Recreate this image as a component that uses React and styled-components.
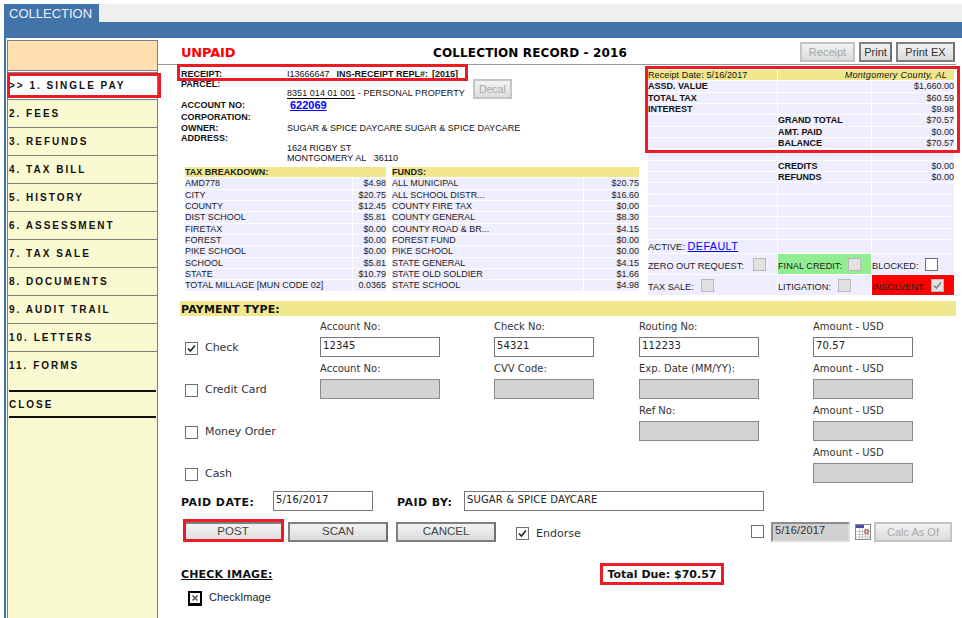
import React from "react";
import styled, { createGlobalStyle } from "styled-components";

const Global = createGlobalStyle`
  html, body { margin: 0; padding: 0; background: #fff; }
  body { font-family: "Liberation Sans", Arial, sans-serif; font-size: 9px; color: #111; }
  * { box-sizing: border-box; }
`;

const RED = "#ed1c24";
const BLUE = "#4273a9";

const Page = styled.div`
  width: 962px;
  height: 618px;
  padding: 4px 0 0 4px;
  overflow: hidden;
  display: flex;
  flex-direction: column;
`;
const TabBar = styled.div`
  height: 18px;
  flex: none;
  display: flex;
  background: #f0f0f0;
`;
const Tab = styled.div`
  width: 95px;
  background: ${BLUE};
  color: #e8f0f8;
  font-size: 13px;
  line-height: 19px;
  padding-left: 5px;
`;
const BlueBar = styled.div`
  height: 16px;
  flex: none;
  background: ${BLUE};
`;
const Body = styled.div`
  flex: 1;
  display: flex;
  border-left: 2px solid ${BLUE};
  padding: 2px 0 0 1px;
  min-height: 0;
`;
const Sidebar = styled.nav`
  width: 151px;
  flex: none;
  background: #fafad2;
  border: 1px solid #808080;
  border-bottom: 0;
  position: relative;
`;
const SideTop = styled.div`
  height: 30px;
  background: #ffdfb0;
  border-bottom: 1px solid #808080;
`;
const SideGap = styled.div`
  height: 1px;
  background: #fff;
`;
const SideItem = styled.div`
  height: ${(p) => p.$h || 28}px;
  border-top: ${(p) => (p.$first ? "1px solid #808080" : "0")};
  border-bottom: ${(p) => (p.$last ? "0" : "1px solid #808080")};
  background: ${(p) => (p.$active ? "#fff" : "transparent")};
  font-weight: bold;
  font-size: 10px;
  letter-spacing: 2px;
  line-height: 11px;
  padding: ${(p) => (p.$first ? 7 : 8)}px 0 0 1px;
  color: #111;
  white-space: nowrap;
`;
const SideActiveMark = styled.div`
  position: absolute;
  left: -1px;
  top: 32px;
  width: 154px;
  height: 25px;
  border: 3px solid ${RED};
`;
const SideClose = styled.div`
  margin: 0 1px;
  height: 28px;
  border-top: 2px solid #111;
  border-bottom: 2px solid #111;
  font-weight: bold;
  font-size: 10px;
  letter-spacing: 2px;
  line-height: 11px;
  padding-top: 7px;
`;
const Main = styled.main`
  flex: 1;
  min-width: 0;
  padding-left: 22px;
  position: relative;
`;
const Header = styled.header`
  height: 25px;
  display: flex;
  align-items: flex-start;
  border-bottom: 1px solid #999;
  margin-right: 6px;
  margin-left: -22px;
  padding-left: 23px;
  position: relative;
`;
const Unpaid = styled.div`
  width: 120px;
  font: bold 13px/22px "DejaVu Sans", Verdana, sans-serif;
  color: #f00;
  padding-top: 2px;
  letter-spacing: -.2px;
`;
const Title = styled.h1`
  margin: 0;
  width: 290px;
  margin-left: 84px;
  text-align: center;
  font: bold 12px/22px "DejaVu Sans", Verdana, sans-serif;
  letter-spacing: .13px;
  color: #000;
  padding-top: 2px;
`;
const HeaderButtons = styled.div`
  margin-left: auto;
  display: flex;
  gap: 4px;
  padding: 2px 1px 0 0;
`;
const Btn = styled.button`
  height: ${(p) => p.$h || 20}px;
  width: ${(p) => p.$w}px;
  padding: 0;
  border: 2px solid ${(p) => (p.disabled ? "#c4c4c4" : "#808080")};
  border-right-color: ${(p) => (p.disabled ? "#c4c4c4" : "#707070")};
  background: linear-gradient(#f3f3f3, #dcdcdc);
  color: ${(p) => (p.disabled ? "#a8a8a8" : "#333")};
  font: 11px "Liberation Sans", Arial, sans-serif;
  line-height: 14px;
  display: block;
  flex: none;
`;
const Columns = styled.div`
  display: flex;
  margin-left: -2px;
  position: relative;
`;
const LeftCol = styled.div`
  width: 469px;
  flex: none;
`;
const RightCol = styled.div`
  width: 306px;
  flex: none;
  margin-left: 1px;
  position: relative;
  padding-top: 5px;
`;
const Info = styled.div`
  display: grid;
  grid-template-columns: 106px 1fr;
  grid-template-rows: 11px 20px 11px 13px 10px 10px 10px 10px;
  padding: 3px 0 0 3px;
  position: relative;
  line-height: 10px;
`;
const InfoLabel = styled.div`
  font-weight: bold;
  white-space: nowrap;
  align-self: ${(p) => p.$align || "center"};
`;
const InfoValue = styled.div`
  white-space: nowrap;
  display: flex;
  align-self: ${(p) => p.$align || "center"};
  align-items: flex-end;
`;
const ParcelText = styled.span`
  padding-bottom: 1px;
  letter-spacing: .05px;
`;
const ParcelNo = styled.span`
  border-bottom: 1px solid #000;
`;
const InsLabel = styled.b`
  margin-left: 7px;
  margin-right: 4px;
`;
const DecalBtn = styled(Btn)`
  margin-left: 8px;
  font-size: 10.5px;
  align-self: center;
`;
const AccountLink = styled.a`
  color: #00f;
  font-weight: bold;
  font-size: 11px;
  padding-top: 1px;
  text-decoration: underline;
  margin-left: 3px;
`;
const ReceiptMark = styled.div`
  position: absolute;
  left: -1px;
  top: -1px;
  width: 291px;
  height: 17px;
  border: 3px solid ${RED};
`;
const TaxTables = styled.div`
  display: grid;
  grid-template-columns: 201px 247px;
  gap: 6px;
  margin: 4px 0 0 7px;
`;
const GridTable = styled.div`
  display: grid;
  grid-template-columns: ${(p) => p.$cols};
  grid-auto-rows: 10.33px;
  row-gap: 1px;
  column-gap: 1px;
  line-height: 10px;
`;
const Cell = styled.div`
  background: ${(p) => p.$bg || "#eeeeff"};
  color: ${(p) => p.$fg || "#222"};
  font-weight: ${(p) => (p.$bold ? "bold" : "normal")};
  font-style: ${(p) => (p.$italic ? "italic" : "normal")};
  text-align: ${(p) => (p.$right ? "right" : "left")};
  white-space: nowrap;
  grid-column: ${(p) => p.$span || "auto"};
  min-width: 0;
  line-height: 10.33px;
  letter-spacing: ${(p) => p.$ls || 0};
  padding-right: ${(p) => p.$pr || 0}px;
`;
const CheckCell = styled.div`
  background: ${(p) => p.$bg || "#eeeeff"};
  color: #222;
  font-size: 9.2px;
  display: flex;
  align-items: flex-end;
  white-space: nowrap;
  padding-bottom: 2px;
  gap: ${(p) => p.$gap || 7}px;
  height: 20px;
  line-height: 11px;
  & > span:last-child { margin-bottom: 1px; }
`;
const ActiveCell = styled.div`
  background: #eeeeff;
  height: 13px;
  line-height: 13px;
  white-space: nowrap;
  color: #222;
  font-size: 9.5px;
`;
const DefaultLink = styled.a`
  color: #00f;
  font-size: 10.8px;
  text-decoration: underline;
  letter-spacing: .4px;
`;
const Blank = styled.div`
  background: #eeeeff;
  height: 13px;
`;
const FlagRows = styled.div`
  display: grid;
  grid-template-columns: 129px 93px 82px;
  gap: 1px;
  margin-top: 1px;
`;
const RightMark = styled.div`
  position: absolute;
  left: -3px;
  top: 1px;
  width: 315px;
  height: 87px;
  border: 3px solid ${RED};
`;
const BoxWrap = styled.span`
  width: 13px;
  height: 13px;
  flex: none;
  border: 1px solid ${(p) => (p.$off ? "#b9b9b9" : "#6f6f6f")};
  background: ${(p) => (p.$off ? "#e2e2e2" : "#fff")};
  display: inline-flex;
  align-items: center;
  justify-content: center;
`;
const CheckBox = ({ on, off }) => (
  <BoxWrap $off={off}>
    {on && (
      <svg width="11" height="11" viewBox="0 0 11 11">
        <path d="M2 5.5 L4.4 8 L9 2.6" fill="none" stroke={off ? "#808080" : "#222"} strokeWidth="1.6" />
      </svg>
    )}
  </BoxWrap>
);
const PaymentBar = styled.div`
  height: 15px;
  margin: 6px 0 0 0;
  width: 776px;
  background: #f0e68c;
  font: bold 11px/17px "DejaVu Sans", Verdana, sans-serif;
  letter-spacing: .15px;
  color: #111;
  padding-left: 1px;
`;
const PayGrid = styled.div`
  display: grid;
  grid-template-columns: 135px 174px 145px 174px 110px;
  grid-auto-rows: 42px;
  margin-left: 5px;
  padding-top: 4px;
`;
const PayType = styled.label`
  display: flex;
  align-items: center;
  gap: 7px;
  font: 11px/14px "DejaVu Sans", Verdana, sans-serif;
  letter-spacing: -.05px;
  color: #333;
  padding: 15px 0 0 0;
`;
const Field = styled.div`
  display: flex;
  flex-direction: column;
`;
const FieldLabel = styled.span`
  font: 10px/13px "DejaVu Sans", Verdana, sans-serif;
  color: #333;
  height: 17px;
`;
const TextBox = styled.input`
  display: block;
  height: 20px;
  width: ${(p) => p.$w}px;
  border: 1px solid ${(p) => (p.disabled ? "#8a8a8a" : "#777")};
  background: ${(p) => (p.disabled ? "#d3d3d3" : "#fff")};
  color: #222;
  font: 10px "DejaVu Sans", Verdana, sans-serif;
  letter-spacing: .15px;
  padding: 0 0 3px 2px;
  outline: 0;
  border-radius: 0;
`;
const PaidRow = styled.div`
  display: flex;
  align-items: center;
  height: 20px;
  margin: 3px 0 0 1px;
`;
const StrongLabel = styled.span`
  font: bold 11px "DejaVu Sans", Verdana, sans-serif;
  letter-spacing: .45px;
  color: #111;
  width: ${(p) => p.$w}px;
  margin-left: ${(p) => p.$ml || 0}px;
  flex: none;
  padding-top: 4px;
`;
const ActionRow = styled.div`
  display: flex;
  align-items: center;
  height: 20px;
  margin: 11px 0 0 3px;
`;
const ActionBtn = styled(Btn)`
  width: 100px;
  margin-right: ${(p) => p.$mr || 5}px;
  font-size: 11.5px;
  color: #444;
  padding-bottom: 2px;
  position: relative;
`;
const PostMark = styled.span`
  position: absolute;
  left: -2px;
  top: -5px;
  right: -3px;
  bottom: -2px;
  border: 3px solid ${RED};
`;
const Endorse = styled.label`
  display: flex;
  align-items: center;
  gap: 7px;
  margin-left: 15px;
  width: 235px;
  font: 11px "DejaVu Sans", Verdana, sans-serif;
  color: #333;
  padding-top: 3px;
`;
const DateBox = styled(TextBox)`
  border: 2px solid #8c8c8c;
  border-right-color: #ddd;
  border-bottom-color: #ddd;
  margin-left: 7px;
  background: #d0d0d0;
  color: #333;
  font: 11px "Liberation Sans", Arial, sans-serif;
`;
const CalWrap = styled.span`
  margin: 0 3px 0 5px;
  display: inline-flex;
`;
const BottomRow = styled.div`
  display: flex;
  align-items: center;
  margin: 21px 0 0 1px;
  height: 22px;
`;
const CheckImageLabel = styled.span`
  font: bold 11px "DejaVu Sans", Verdana, sans-serif;
  letter-spacing: .15px;
  text-decoration: underline;
  color: #111;
  width: 419px;
  flex: none;
  padding-top: 1px;
`;
const TotalDue = styled.div`
  width: 124px;
  height: 22px;
  border: 3px solid ${RED};
  font: bold 11px/17px "DejaVu Sans", Verdana, sans-serif;
  text-align: center;
  color: #111;
`;
const ImgRow = styled.div`
  display: flex;
  align-items: flex-start;
  gap: 7px;
  margin: 6px 0 0 8px;
  font: 11px/13px "Liberation Sans", Arial, sans-serif;
  color: #222;
`;
const BrokenIcon = styled.span`
  width: 14px;
  height: 15px;
  background: #000;
  display: inline-flex;
  align-items: center;
  justify-content: center;
`;

const menu = ["2. FEES", "3. REFUNDS", "4. TAX BILL", "5. HISTORY", "6. ASSESSMENT", "7. TAX SALE", "8. DOCUMENTS", "9. AUDIT TRAIL", "10. LETTERS"];
const tax = [["AMD778", "$4.98"], ["CITY", "$20.75"], ["COUNTY", "$12.45"], ["DIST SCHOOL", "$5.81"], ["FIRETAX", "$0.00"], ["FOREST", "$0.00"], ["PIKE SCHOOL", "$0.00"], ["SCHOOL", "$5.81"], ["STATE", "$10.79"], ["TOTAL MILLAGE [MUN CODE 02]", "0.0365"]];
const funds = [["ALL MUNICIPAL", "$20.75"], ["ALL SCHOOL DISTR...", "$16.60"], ["COUNTY FIRE TAX", "$0.00"], ["COUNTY GENERAL", "$8.30"], ["COUNTY ROAD & BR...", "$4.15"], ["FOREST FUND", "$0.00"], ["PIKE SCHOOL", "$0.00"], ["STATE GENERAL", "$4.15"], ["STATE OLD SOLDIER", "$1.66"], ["STATE SCHOOL", "$4.98"]];
const summary = [["ASSD. VALUE", "", "$1,660.00"], ["TOTAL TAX", "", "$60.59"], ["INTEREST", "", "$9.98"], ["", "GRAND TOTAL", "$70.57"], ["", "AMT. PAID", "$0.00"], ["", "BALANCE", "$70.57"], ["", "", ""], ["", "CREDITS", "$0.00"], ["", "REFUNDS", "$0.00"], ["", "", ""], ["", "", ""], ["", "", ""], ["", "", ""], ["", "", ""]];

const AmountField = ({ value, off }) => (
  <Field>
    <FieldLabel>Amount - USD</FieldLabel>
    <TextBox $w={100} disabled={off} readOnly value={value || ""} />
  </Field>
);
const PayField = ({ label, value, w, off }) => (
  <Field>
    <FieldLabel>{label}</FieldLabel>
    <TextBox $w={w} disabled={off} readOnly value={value || ""} />
  </Field>
);
const Empty = () => <div />;

const Calendar = () => (
  <svg width="16" height="16" viewBox="0 0 16 16">
    <rect x="0.5" y="0.5" width="15" height="15" fill="#fff" stroke="#8a8a8a" />
    <rect x="1" y="1" width="8" height="3" fill="#4a4aa8" />
    <path d="M1 7.5H15M1 10.5H15M1 13H15M4.5 4V15M7.5 4V15M10.5 4V15M13 4V15" stroke="#c8c8c8" strokeWidth="1" />
    <rect x="10" y="6" width="3" height="3" fill="#fff" stroke="#a03030" />
  </svg>
);

export default function App() {
  return (
    <Page>
      <Global />
      <TabBar><Tab>COLLECTION</Tab></TabBar>
      <BlueBar />
      <Body>
        <Sidebar>
          <SideTop />
          <SideGap />
          <SideItem $first $active>{">> 1. SINGLE PAY"}</SideItem>
          {menu.map((m) => <SideItem key={m}>{m}</SideItem>)}
          <SideItem $last $h={38}>11. FORMS</SideItem>
          <SideClose>CLOSE</SideClose>
          <SideActiveMark />
        </Sidebar>
        <Main>
          <Header>
            <Unpaid>UNPAID</Unpaid>
            <Title>COLLECTION RECORD - 2016</Title>
            <HeaderButtons>
              <Btn disabled $w={55}>Receipt</Btn>
              <Btn $w={33}>Print</Btn>
              <Btn $w={59}>Print EX</Btn>
            </HeaderButtons>
          </Header>
          <Columns>
            <LeftCol>
              <Info>
                <InfoLabel>RECEIPT:</InfoLabel>
                <InfoValue>I13666647<InsLabel>INS-RECEIPT REPL#:</InsLabel><b>[2015]</b></InfoValue>
                <InfoLabel $align="start">PARCEL:</InfoLabel>
                <InfoValue>
                  <ParcelText><ParcelNo>8351 014 01 001</ParcelNo> - PERSONAL PROPERTY</ParcelText>
                  <DecalBtn disabled $w={39}>Decal</DecalBtn>
                </InfoValue>
                <InfoLabel>ACCOUNT NO:</InfoLabel>
                <InfoValue><AccountLink>622069</AccountLink></InfoValue>
                <InfoLabel>CORPORATION:</InfoLabel>
                <div />
                <InfoLabel>OWNER:</InfoLabel>
                <InfoValue>SUGAR &amp; SPICE DAYCARE SUGAR &amp; SPICE DAYCARE</InfoValue>
                <InfoLabel>ADDRESS:</InfoLabel>
                <div />
                <div />
                <InfoValue>1624 RIGBY ST</InfoValue>
                <div />
                <InfoValue>MONTGOMERY AL&nbsp;&nbsp; 36110</InfoValue>
                <ReceiptMark />
              </Info>
              <TaxTables>
                <GridTable $cols="167px 33px">
                  <Cell $bg="#f0e68c" $bold $span="1 / -1">TAX BREAKDOWN:</Cell>
                  {tax.map(([a, b]) => (
                    <React.Fragment key={a}><Cell>{a}</Cell><Cell $right>{b}</Cell></React.Fragment>
                  ))}
                </GridTable>
                <GridTable $cols="191px 55px">
                  <Cell $bg="#f0e68c" $bold $span="1 / -1">FUNDS:</Cell>
                  {funds.map(([a, b]) => (
                    <React.Fragment key={a}><Cell>{a}</Cell><Cell $right>{b}</Cell></React.Fragment>
                  ))}
                </GridTable>
              </TaxTables>
            </LeftCol>
            <RightCol>
              <GridTable $cols="129px 93px 82px">
                <Cell $bg="#f0e68c" $fg="#111" $ls=".1px">Receipt Date: 5/16/2017</Cell>
                <Cell $bg="#f0e68c" $fg="#111" $italic $right $span="2 / 4" $pr={7} $ls=".3px">Montgomery County, AL</Cell>
                {summary.map(([a, b, c], i) => (
                  <React.Fragment key={i}>
                    <Cell $bold $fg="#111">{a}</Cell>
                    <Cell $bold $fg="#111">{b}</Cell>
                    <Cell $right $fg="#222">{c}</Cell>
                  </React.Fragment>
                ))}
              </GridTable>
              <FlagRows>
                <ActiveCell>ACTIVE: <DefaultLink>DEFAULT</DefaultLink></ActiveCell>
                <Blank />
                <Blank />
                <CheckCell $gap={9}>ZERO OUT REQUEST: <CheckBox off /></CheckCell>
                <CheckCell $bg="#90ee90" $gap={6}>FINAL CREDIT: <CheckBox off /></CheckCell>
                <CheckCell>BLOCKED: <CheckBox /></CheckCell>
                <CheckCell>TAX SALE: <CheckBox off /></CheckCell>
                <CheckCell>LITIGATION: <CheckBox off /></CheckCell>
                <CheckCell $bg="#f00" $gap={6}>INSOLVENT: <CheckBox on off /></CheckCell>
              </FlagRows>
              <RightMark />
            </RightCol>
          </Columns>
          <PaymentBar>PAYMENT TYPE:</PaymentBar>
          <PayGrid>
            <PayType><CheckBox on />Check</PayType>
            <PayField label="Account No:" value="12345" w={120} />
            <PayField label="Check No:" value="54321" w={100} />
            <PayField label="Routing No:" value="112233" w={120} />
            <AmountField value="70.57" />

            <PayType><CheckBox />Credit Card</PayType>
            <PayField label="Account No:" w={120} off />
            <PayField label="CVV Code:" w={100} off />
            <PayField label="Exp. Date (MM/YY):" w={120} off />
            <AmountField off />

            <PayType><CheckBox />Money Order</PayType>
            <Empty />
            <Empty />
            <PayField label="Ref No:" w={120} off />
            <AmountField off />

            <PayType><CheckBox />Cash</PayType>
            <Empty />
            <Empty />
            <Empty />
            <AmountField off />
          </PayGrid>
          <PaidRow>
            <StrongLabel $w={92}>PAID DATE:</StrongLabel>
            <TextBox $w={100} readOnly value="5/16/2017" />
            <StrongLabel $w={67} $ml={24}>PAID BY:</StrongLabel>
            <TextBox $w={300} readOnly value="SUGAR & SPICE DAYCARE" />
          </PaidRow>
          <ActionRow>
            <ActionBtn $w={100}>POST<PostMark /></ActionBtn>
            <ActionBtn $w={100} $mr={8}>SCAN</ActionBtn>
            <ActionBtn $w={100}>CANCEL</ActionBtn>
            <Endorse><CheckBox on />Endorse</Endorse>
            <CheckBox />
            <DateBox $w={79} disabled readOnly value="5/16/2017" />
            <CalWrap><Calendar /></CalWrap>
            <Btn disabled $w={78}>Calc As Of</Btn>
          </ActionRow>
          <BottomRow>
            <CheckImageLabel>CHECK IMAGE:</CheckImageLabel>
            <TotalDue>Total Due: $70.57</TotalDue>
          </BottomRow>
          <ImgRow>
            <BrokenIcon>
              <svg width="10" height="10" viewBox="0 0 10 10">
                <rect width="10" height="10" fill="#fff" />
                <path d="M2.5 2.5L7.5 7.5M7.5 2.5L2.5 7.5" stroke="#555" strokeWidth="1.6" />
              </svg>
            </BrokenIcon>
            CheckImage
          </ImgRow>
        </Main>
      </Body>
    </Page>
  );
}
